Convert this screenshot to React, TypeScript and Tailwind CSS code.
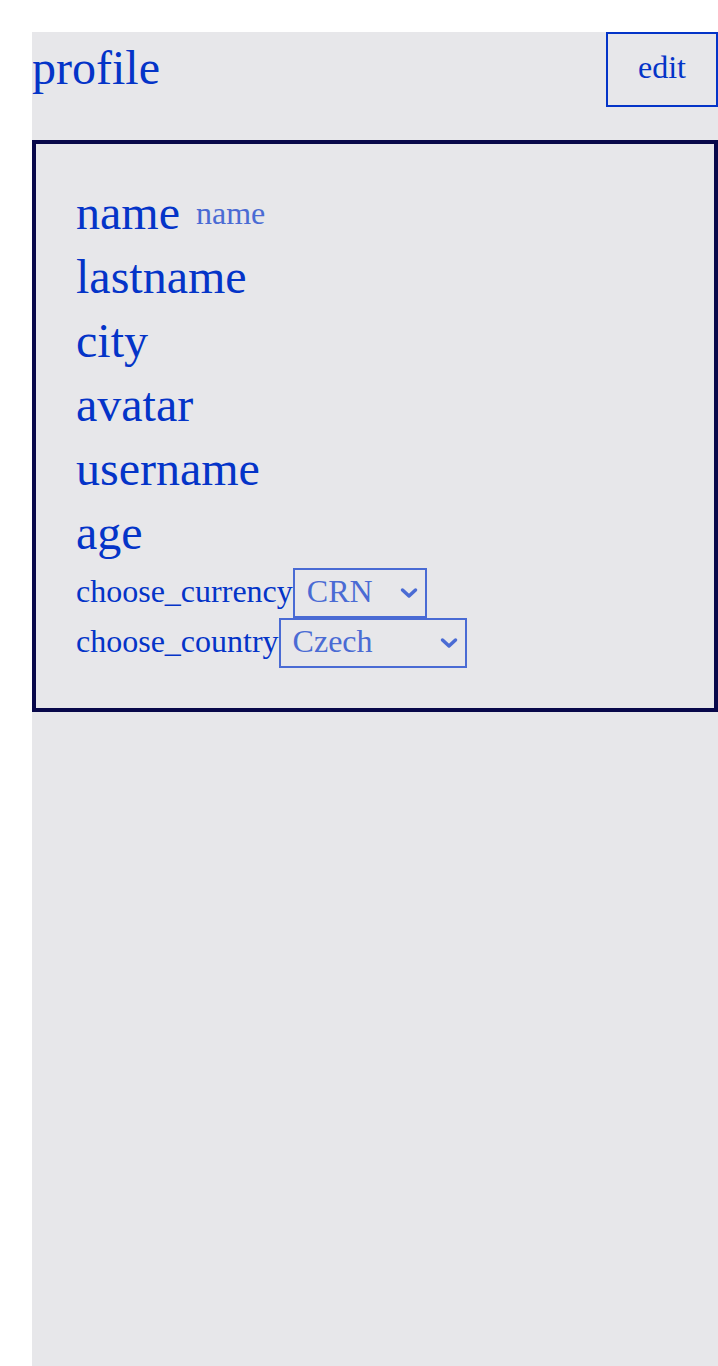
import React from "react";

const fields = ["lastname", "city", "avatar", "username", "age"];

function Chevron() {
  return (
    <svg
      className="pointer-events-none absolute right-[9px] top-[19px] h-[12px] w-[18px]"
      viewBox="0 0 18 12"
      fill="none"
      stroke="#4a6bd4"
      strokeWidth="3.5"
      strokeLinecap="round"
      strokeLinejoin="round"
    >
      <path d="M2.5 3 L9 9 L15.5 3" />
    </svg>
  );
}

export default function App() {
  return (
    <div className="min-h-[1366px] bg-white pl-8 pt-8 font-['Liberation_Serif',serif] text-[#0434c8]">
      <div className="min-h-[1334px] bg-[#e7e7ea]">
        <header className="flex h-[75px] items-start justify-between">
          <h1 className="text-[48px] leading-[72px]">profile</h1>
          <button className="h-[75px] border-2 border-[#0434c8] px-[30px] pt-[15px] pb-[19px] text-[32px] leading-[37px]">
            edit
          </button>
        </header>

        <section className="mt-[33px] border-4 border-[#08084a] px-10 pt-[37px] pb-10">
          <div className="flex gap-4 text-[48px] leading-[64px]">
            <span>name</span>
            <span className="text-[32px] text-[#4a6bd4]">name</span>
          </div>
          {fields.map((f) => (
            <div key={f} className="text-[48px] leading-[64px]">
              {f}
            </div>
          ))}

          <div className="mt-[3px] flex h-[50px] items-start text-[32px]">
            <span className="leading-[46px]">choose_currency</span>
            <div className="relative">
              <select
                defaultValue="CRN"
                className="block h-[50px] w-[134px] appearance-none border-2 border-[#4a6bd4] pt-[3px] pb-[7px] pl-[12px] leading-[36px] text-[#4a6bd4] outline-none"
              >
                <option>CRN</option>
                <option>EUR</option>
                <option>USD</option>
              </select>
              <Chevron />
            </div>
          </div>
          <div className="flex h-[50px] items-start text-[32px]">
            <span className="leading-[46px]">choose_country</span>
            <div className="relative">
              <select
                defaultValue="Czech"
                className="block h-[50px] w-[188px] appearance-none border-2 border-[#4a6bd4] pt-[3px] pb-[7px] pl-[12px] leading-[36px] text-[#4a6bd4] outline-none"
              >
                <option>Czech</option>
                <option>Germany</option>
                <option>Austria</option>
              </select>
              <Chevron />
            </div>
          </div>
        </section>
      </div>
    </div>
  );
}
